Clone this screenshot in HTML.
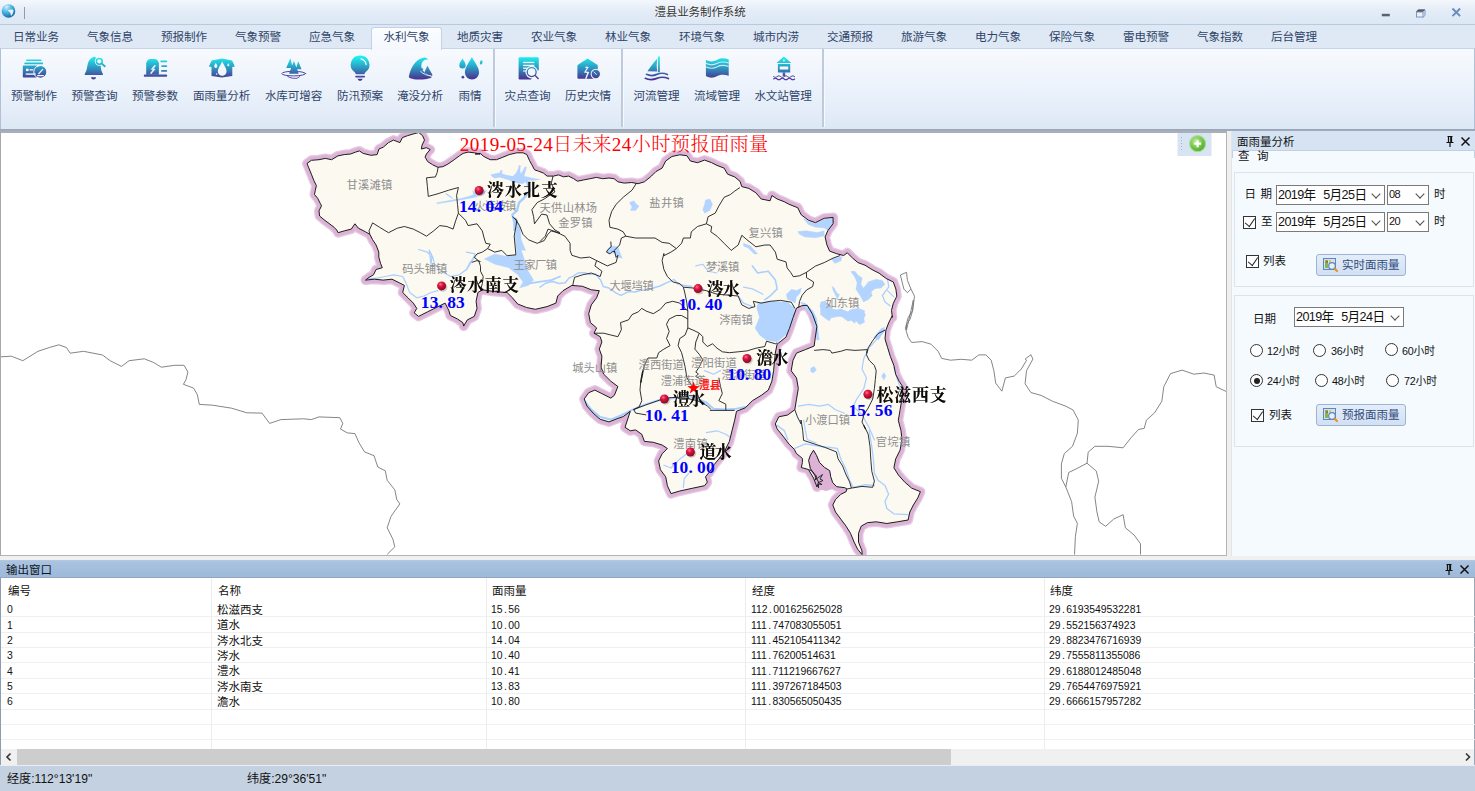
<!DOCTYPE html>
<html lang="zh-CN">
<head>
<meta charset="utf-8">
<title>澧县业务制作系统</title>
<style>
*{box-sizing:border-box;margin:0;padding:0}
html,body{width:1475px;height:791px;overflow:hidden;background:#dfe9f5}
body{position:relative;font-family:"Liberation Sans","Noto Sans CJK SC",sans-serif;font-size:11.5px;color:#1e2a3c;line-height:1}
.abs{position:absolute}
/* title bar */
#title{left:0;top:0;width:1475px;height:25px;background:linear-gradient(#f4f8fc 0,#e3ecf7 45%,#dde8f5 100%);border-bottom:1px solid #b9c9de}
#title .cap{left:0;width:1400px;top:6.500px;text-align:center;font-size:11.5px;color:#333;letter-spacing:-.1px;text-shadow:0 0 2px #fff}
/* tabs */
#tabs{left:0;top:25px;width:1475px;height:23px;background:#dfe9f5}
.tab{position:absolute;top:0;width:74px;height:23px;text-align:center;line-height:24px;font-size:11.6px;color:#2f4468;letter-spacing:-.15px}
.tab.on{top:2px;height:23px;z-index:3;line-height:18.500px;background:linear-gradient(#fbfdff,#f4f8fd);border:1px solid #c3d2e5;border-bottom:none;border-radius:3px 3px 0 0;width:71px}
/* ribbon */
#ribbon{left:0;top:48px;width:1475px;height:81px;background:linear-gradient(#f7fafe 0,#eef4fc 40%,#dde8f6 100%);border-top:1px solid #c6d4e6;border-left:1px solid #b1c0d5;border-right:1px solid #b1c0d5}#ribbon>*{margin-left:-1px}
.rb{position:absolute;top:0;height:78px;text-align:center}
.rb svg{position:absolute;top:7px;left:50%;margin-left:-14px;width:28px;height:26px}
.rb span{position:absolute;left:-60px;right:-60px;top:41px;text-align:center;font-size:11.6px;color:#2f4468;white-space:nowrap;letter-spacing:-.15px}
.sep{position:absolute;top:0;width:1.500px;height:78px;background:#bfcbdc;box-shadow:1px 0 0 #f7fafd}
/* map */
#map{left:0;top:129px;width:1227px;height:426.600px;background:#fff;border:1px solid #b4b4b4;border-top:4px solid #abafb6;border-left:1px solid #a8a8a8;overflow:hidden}#map>svg{left:0!important;top:-1px!important}
/* right panel */
#rp{left:1231px;top:131px;width:244px;height:425.500px;background:#f5fafe;border-left:1px solid #e2e5ea}
#rp .hd{left:0;top:0;width:243px;height:19px;background:#d6e3f2}
#rp .hd b{position:absolute;left:5px;top:5.500px;font-weight:normal;font-size:11.5px;color:#111}
.box{position:absolute;border:1px solid #dde3ea;background:#f5fafe}
.combo{position:absolute;background:#fff;border:1px solid #7a7a7a;height:20px;font-size:12.6px;color:#111;line-height:18px;padding-left:1px;white-space:pre;letter-spacing:-.6px;word-spacing:.9px}
.combo i{position:absolute;right:5px;top:5px;width:6px;height:6px;border-right:1px solid #555;border-bottom:1px solid #555;transform:rotate(45deg) scale(1.1,1.1)}
.lbl.s{font-size:10.8px}.lbl.s{letter-spacing:-.2px}.lbl{position:absolute;font-size:11.5px;color:#111;white-space:nowrap}
.chk{position:absolute;width:13px;height:13px;border:1px solid #333;background:#fff;overflow:hidden}
.chk:after{content:"";position:absolute;left:3.300px;top:-1.200px;width:4.600px;height:9px;border-right:1.200px solid #222;border-bottom:1.200px solid #222;transform:rotate(40deg) skewX(6deg)}
.rad{position:absolute;width:13px;height:13px;border:1px solid #333;border-radius:50%;background:#fff}
.rad.on:after{content:"";position:absolute;left:2.5px;top:2.5px;width:6px;height:6px;border-radius:50%;background:#222}
.btn{position:absolute;width:90px;height:22px;border:1px solid #9bb3d4;border-radius:3px;background:linear-gradient(#e4edf9,#d3e0f3);font-size:11.5px;color:#2f4c7c;line-height:20px;padding-left:25px;white-space:nowrap}
/* output */
#gap{left:0;top:556px;width:1475px;height:5px;background:#f0f0f0}#vgap{left:1227px;top:131px;width:4px;height:426px;background:#f0f0f0}
#ohd{left:0;top:560px;width:1475px;height:18px;z-index:2;border-bottom:1px solid #93a6c0;background:linear-gradient(#b3c9e4 0,#a9c2e0 12%,#9eb9d9 100%);}
#ohd b{position:absolute;left:6px;top:4.500px;font-weight:normal;font-size:11.5px;color:#0c1522}
#tbl{left:0;top:577px;width:1475px;height:172px;background:#fff;border-left:1.500px solid #8f9cb0;border-right:1px solid #9aa7b8}
.row{position:absolute;left:0;width:1474px;height:15.36px;border-bottom:1px solid #f0f0f0}
.c{position:absolute;top:2.800px;font-size:11.5px;color:#111;white-space:nowrap}
.n{font-size:10.4px;letter-spacing:-.02px;top:3.300px}.n u{text-decoration:none;padding:0 1.45px}
.vl{position:absolute;top:0;width:1px;height:172px;background:#ececec}
#hsb{left:0;top:749px;width:1475px;height:17px;background:#f0f0f0;border-left:1.500px solid #8f9cb0;border-right:1px solid #9aa7b8;border-bottom:1px solid #93a2b8}
#hsb .th{position:absolute;left:15.500px;top:0;width:934px;height:16px;background:#cdcdcd}
#status{left:0;top:765px;width:1475px;height:26px;background:#c4d1e1;border-top:1px solid #e9eef5}
#status span{position:absolute;top:7px;font-size:12.1px;color:#111;white-space:nowrap}
</style>
</head>
<body>
<!--TITLE-->
<div id="title" class="abs">
<svg class="abs" style="left:0;top:2px" width="18" height="18" viewBox="0 2 18 18"><defs><radialGradient id="gl" cx=".35" cy=".22" r=".85"><stop offset="0" stop-color="#c9eefc"/><stop offset=".35" stop-color="#63c0ea"/><stop offset=".75" stop-color="#2588c6"/><stop offset="1" stop-color="#13609f"/></radialGradient></defs><circle cx="8.500" cy="11" r="6.800" fill="url(#gl)"/><path d="M7.800 10.500c1.500-.7 3.200-1.200 4.800-1 .7.400 1 1 .9 1.800-.5 1.500-1 2.900-1.600 4-.4.300-.8.300-1 0-.2-1.100-.4-2-.9-2.900-.8-.5-1.700-1-2.200-1.900z" fill="#f4f8fb" opacity=".92"/><path d="M5.500 6.500c1.500-.8 3.400-1 5-.5-1 .5-2.400.6-3.300 1.200-.7.500-1.500.3-1.700-.7z" fill="#e8f6fd" opacity=".55"/><path d="M2.300 13.500c.5.300 1 .4 1.400.9-.6.100-1.100-.2-1.400-.9z" fill="#fff" opacity=".7"/></svg>
<div class="abs" style="left:24px;top:7px;width:1.300px;height:11.600px;background:#9a9aa0"></div>
<div class="abs cap">澧县业务制作系统</div>
<svg class="abs" style="left:1375px;top:0" width="100" height="25" viewBox="1375 0 100 25"><rect x="1381.800" y="13.800" width="8" height="2.500" fill="#59606f"/><path d="M1416.500 12.200l2-2.300h6.500v5.300l-2 2.300" fill="#dfe9f5" stroke="#7c98c2" stroke-width="1"/><rect x="1416.500" y="12" width="6.500" height="5" fill="#e9f0f9" stroke="#7c98c2" stroke-width="1"/><path d="M1416 11.800l2.200-2.400h7l-2.200 2.400z" fill="#585858"/><path d="M1452.500 8.500l7.600 7.600M1460.100 8.500l-7.600 7.600" stroke="#6c8cbc" stroke-width="2" fill="none"/></svg>
</div>
<!--TABS-->
<div id="tabs" class="abs">
<div class="tab" style="left:-1px">日常业务</div>
<div class="tab" style="left:73px">气象信息</div>
<div class="tab" style="left:147px">预报制作</div>
<div class="tab" style="left:221px">气象预警</div>
<div class="tab" style="left:295px">应急气象</div>
<div class="tab on" style="left:371px">水利气象</div>
<div class="tab" style="left:443px">地质灾害</div>
<div class="tab" style="left:517px">农业气象</div>
<div class="tab" style="left:591px">林业气象</div>
<div class="tab" style="left:665px">环境气象</div>
<div class="tab" style="left:739px">城市内涝</div>
<div class="tab" style="left:813px">交通预报</div>
<div class="tab" style="left:887px">旅游气象</div>
<div class="tab" style="left:961px">电力气象</div>
<div class="tab" style="left:1035px">保险气象</div>
<div class="tab" style="left:1109px">雷电预警</div>
<div class="tab" style="left:1183px">气象指数</div>
<div class="tab" style="left:1257px">后台管理</div>
</div>
<!--RIBBON-->
<div id="ribbon" class="abs">

<svg class="abs" style="left:0;top:-1px" width="1475" height="81" viewBox="0 48 1475 81">
<defs><linearGradient id="ig" gradientUnits="userSpaceOnUse" x1="0" y1="57" x2="0" y2="80"><stop offset="0" stop-color="#1ff0ee"/><stop offset=".45" stop-color="#2c9cc4"/><stop offset=".8" stop-color="#41529f"/><stop offset="1" stop-color="#4a2c92"/></linearGradient></defs>
<g fill="url(#ig)" stroke="none">
<!-- 1 预警制作 -->
<rect x="26" y="59.4" width="15.6" height="1.7" rx=".8"/><rect x="24.3" y="62.4" width="18.8" height="1.9" rx=".9"/>
<path d="M23.6 65.6h13.5v12h-13.5a.8.8 0 0 1-.8-.8v-10.4a.8.8 0 0 1 .8-.8z"/>
<circle cx="40.5" cy="71.9" r="5.9"/>
<!-- 2 预警查询 -->
<path d="M93.3 57c1.2-.6 2.2 0 2.6 1 1.2 2 3.2 3.500 4.600 6.500.6 3.500.4 6.500 2.300 9.200.4.700.1 1.400-.700 1.400h-16.600c-.8 0-1.100-.7-.7-1.400 2.200-3 2.200-6.500 2.900-9.700.6-3 2.700-5.700 5.600-7z"/>
<path d="M91 77.300h5c0 1.300-1.100 2.100-2.500 2.100s-2.500-.8-2.500-2.100z"/>
<!-- 3 预警参数 -->
<path d="M146.200 74.800v-11.200a4.500 4.500 0 0 1 4.500-4.500h3.700a4.500 4.500 0 0 1 4.500 4.500v11.200z"/>
<rect x="143.800" y="74.600" width="23.400" height="2.100" rx=".9"/>
<rect x="160.300" y="60.600" width="6.900" height="1.700" rx=".8"/><rect x="161.300" y="65.300" width="5.900" height="1.700" rx=".8"/><rect x="161" y="70.100" width="6.200" height="1.700" rx=".8"/>
<!-- 4 面雨量分析 -->
<path d="M221.900 58.600l10.200 1.900 2.800 6.100-2.600.5v8.800l-10.400 1.700-10.400-1.700v-8.800l-2.600-.5 2.800-6.100z"/>
<!-- 5 水库可增容 -->
<path d="M290.400 58.300l2.300 9.800h-6.500zM293.900 60.900l4.800 12.600h-9.600zM298.200 61.300l3.400 8h-5.800z"/>
<!-- 6 防汛预案 -->
<path d="M360.100 55.400a9.300 9.300 0 0 1 5.400 16.900c-.6.500-.9 1.100-1 1.900h-8.800c-.1-.8-.4-1.400-1-1.900a9.300 9.300 0 0 1 5.400-16.900z"/>
<rect x="355.200" y="75.800" width="9.800" height="1.700" rx=".8"/><path d="M357.400 78.800h5.400l-1.600 1.900h-2.200z"/>
<!-- 7 淹没分析 -->
<path d="M408.800 77c1.500-8.500 6-17.500 14.500-19.300 2-.4 4 .3 4.900 2-2.700-.6-5.500.8-6.500 3.600-1.200 3.400.2 6.600 2.900 9.300 2.300 2.100 5.200 3.400 7.400 4.200-.3 1.200-5 2.800-11.600 2.800s-11.200-1.200-11.600-2.600z"/>
<path d="M427.400 65.700l4.900 8.800c.2.700-.1 1.300-.6 1.500-2.800-.8-5.400-2.200-7.300-3.800z"/>
<path d="M421.200 69.400l1.300-1.700.9 2.200z"/>
<!-- 8 雨情 -->
<path d="M471.900 57c2.600 5.200 7.200 10.200 7.200 15.500a7.100 7.100 0 0 1-14.200 0c0-5.300 4.400-10.300 7-15.500z"/>
<path d="M462.500 58.600c1.200 2.400 3.200 4.300 3.200 6.600a3.200 3.200 0 0 1-6.400 0c0-2.300 2-4.200 3.200-6.600z"/>
<ellipse cx="481.200" cy="62.400" rx="1.300" ry="2.200" transform="rotate(12 481.200 62.400)"/><circle cx="462.900" cy="77.200" r="1.350"/>
<!-- 9 灾点查询 -->
<path d="M519.600 57.200h18.200a1 1 0 0 1 1 1v11.800l-7.800 9.600h-11.400a1 1 0 0 1-1-1v-20.400a1 1 0 0 1 1-1z"/>
<!-- 10 历史灾情 -->
<path d="M587.600 58.500l9.600 6.200c.4.300.6.700.6 1.200v11.800a1 1 0 0 1-1 1h-18.400a1 1 0 0 1-1-1v-11.800c0-.5.200-.9.600-1.200z"/>
<!-- 11 河流管理 -->
<path d="M658.100 56.600h1.700v15.600h-1.700z"/><path d="M657.600 58.200c-1 4.500-.9 9-.2 13.300l-10-.2c3.500-5 6.300-9.200 10.200-13.100z"/>
<!-- 12 流域管理 -->
<path d="M705.900 59.800c4 2.200 7.400 2.200 11.400 0s7.400-1.600 11.400-.3v16.300c-4-1.300-7.400-1.900-11.400.3s-7.400 2.200-11.400 0z"/>
<!-- 13 水文站管理 -->
<path d="M783.900 56.400l7.400 6.700h-14.800z"/><rect x="777.900" y="64" width="12.300" height="8.600" rx=".6"/><rect x="782.700" y="72.400" width="2.500" height="3.700"/>
</g>
<g fill="none" stroke="url(#ig)" stroke-linecap="round">
<!-- 2 magnifier -->
<circle cx="99.300" cy="61.300" r="4.500" stroke="none" fill="#f4f8fc"/><path d="M101.600 63.500l3.200 2.700" stroke="#f4f8fc" stroke-width="3.400"/><circle cx="99.300" cy="61.300" r="2.900" stroke-width="1.500" fill="#f4f8fc"/><path d="M101.700 63.600l3.100 2.600" stroke-width="1.900"/>
<!-- 5 ripples -->
<ellipse cx="293.700" cy="73.600" rx="12" ry="2.300" stroke-width="1" stroke="#4b45a0"/>
<path d="M287.500 76.200c2 1.600 5 2.300 8 2.100M299.800 76.400c-.8.900-2 1.600-3.600 2" stroke-width=".9" stroke="#4b38a0"/>
<!-- 11 waves -->
<path d="M646.500 74.300c3.300 1.600 6.800 1.600 10.300.1s7.200-1.500 10.600.1" stroke-width="1.700"/>
<path d="M645.300 78.300c3.600 1.700 7.500 1.700 11.500.1s7.900-1.500 11.600.2" stroke-width="1.700"/>
<!-- 13 waves -->
<path d="M773.600 76.600c1.200 1 2.300 1 3.500 0s2.300-1 3.500 0 2.300 1 3.500 0 2.300-1 3.500 0 2.300 1 3.500 0 2.300-1 3.500 0" stroke-width="1" stroke="#4a3a9c"/>
<path d="M773.600 79c1.200-1 2.300-1 3.500 0s2.300 1 3.500 0 2.300-1 3.500 0 2.300 1 3.500 0 2.300-1 3.500 0 2.300 1 3.500 0" stroke-width="1.100" stroke="#4a2f96"/>
</g>
<!-- cone base repaint over ripple -->
<path d="M293.900 63l4.500 10.400h-9z" fill="url(#ig)"/>
<g fill="#f3f7fc" stroke="none">
<!-- 1 whites -->
<circle cx="27.300" cy="69.900" r="1.450"/><rect x="29.500" y="69.200" width="3.600" height="1.300"/><rect x="25.700" y="73.400" width="10" height="1.400"/>
<circle cx="40.500" cy="71.900" r="6.700" fill="none" stroke="#f3f7fc" stroke-width="1"/>
<path d="M38 73.600l4.500-4.800.9.800-4.500 4.800z"/><rect x="37.100" y="74.900" width="6.800" height="1.300" rx=".5"/>
<!-- 3 bolt -->
<path d="M154.500 65l-3.800 4.400 2.200.3-2.900 3.600 1.300.8 4.200-5-2.100-.4 2.600-2.900z"/>
<!-- 4 drops -->
<path d="M222.200 61.400c1.500 3.300 4.400 6.700 4.400 9.900a4.400 4.400 0 0 1-8.800 0c0-3.200 2.900-6.600 4.400-9.900z"/>
<path d="M215.800 62.800c.6 1.400 1.600 2.300 1.600 3.500a1.600 1.600 0 0 1-3.200 0c0-1.200 1-2.100 1.600-3.500z"/>
<path d="M228.300 63c.4.900 1 1.500 1 2.300a1 1 0 0 1-2 0c0-.8.600-1.400 1-2.300z"/><circle cx="216.600" cy="74" r=".8"/>
<!-- 6 highlight -->
<path d="M361 58.800c2.600.7 4.600 2.900 5.200 5.700" fill="none" stroke="#f3f7fc" stroke-width="1.300" stroke-linecap="round"/>
<!-- 7 foam line -->
<path d="M420.400 71.200c2.800 2.900 6.700 4.300 11.200 5" fill="none" stroke="#f3f7fc" stroke-width=".9"/>
<!-- 9 doc lines + magnifier -->
<rect x="523.100" y="61.800" width="11.200" height="1.300"/><rect x="523.100" y="64.800" width="11.200" height="1.300"/><rect x="523.100" y="67.600" width="5" height="1.300"/><rect x="523.100" y="70.400" width="3" height="1.200"/>
<circle cx="531.700" cy="72.100" r="6.300"/>
<path d="M531 79.700l7.900-9.800v9.800z"/>
<!-- 10 crack + clock ring -->
<path d="M585.600 66.400l3.200.6-2.900 4.600 3.300.4-2.700 6.700h-1.500l2.300-5.700-3.300-.4 2.800-4.600-1.500-.3z"/>
<circle cx="595.800" cy="74" r="5.200"/>
<!-- 11 sail slit -->
<path d="M657.500 59.500c-.9 3.800-.9 7.700-.3 11.500l.7 0c-.5-3.800-.5-7.600 0-11.400z" opacity=".75"/>
<!-- 12 lines -->
<path d="M705.900 63.300c4 2.200 7.400 2.200 11.400 0s7.400-1.600 11.400-.3M705.900 66.700c4 2.200 7.400 2.200 11.400 0s7.400-1.600 11.400-.3" fill="none" stroke="#f3f7fc" stroke-width="1.100" opacity=".8"/>
<!-- 13 window + roof dot -->
<rect x="779.700" y="66.600" width="8.600" height="3" rx=".4"/><circle cx="783.900" cy="60.500" r=".9"/><rect x="776" y="63.100" width="16" height=".9"/>
</g>
<g fill="url(#ig)" stroke="none">
<!-- 9 magnifier ring -->
<path d="M531.700 67a5.100 5.100 0 1 0 0 10.200 5.100 5.100 0 0 0 0-10.200zm0 1.300a3.800 3.800 0 1 1 0 7.600 3.800 3.800 0 0 1 0-7.600z" fill-rule="evenodd"/>
<path d="M534.300 75.500l1-1 3.700 4-1 1z"/>
<!-- 10 clock -->
<circle cx="595.800" cy="74" r="4.200"/>
</g>
<path d="M594 72l2.400 2.600" stroke="#f3f7fc" stroke-width=".9" fill="none" stroke-linecap="round"/>
</svg>
<div class="rb" style="left:33.0px;width:2px"><span>预警制作</span></div>
<div class="rb" style="left:93.5px;width:2px"><span>预警查询</span></div>
<div class="rb" style="left:154.0px;width:2px"><span>预警参数</span></div>
<div class="rb" style="left:220.5px;width:2px"><span>面雨量分析</span></div>
<div class="rb" style="left:292.5px;width:2px"><span>水库可增容</span></div>
<div class="rb" style="left:359.0px;width:2px"><span>防汛预案</span></div>
<div class="rb" style="left:419.0px;width:2px"><span>淹没分析</span></div>
<div class="rb" style="left:469.0px;width:2px"><span>雨情</span></div>
<div class="rb" style="left:526.5px;width:2px"><span>灾点查询</span></div>
<div class="rb" style="left:587.0px;width:2px"><span>历史灾情</span></div>
<div class="rb" style="left:655.5px;width:2px"><span>河流管理</span></div>
<div class="rb" style="left:716.0px;width:2px"><span>流域管理</span></div>
<div class="rb" style="left:782.0px;width:2px"><span>水文站管理</span></div>
<div class="sep" style="left:493px"></div>
<div class="sep" style="left:621px"></div>
<div class="sep" style="left:822px"></div>

</div>
<div class="abs" style="left:0;top:128.600px;width:1475px;height:2px;background:linear-gradient(#98a5b8,#a3adbb);z-index:4"></div>
<!--MAP-->
<div id="map" class="abs">
<!--MAPSVG_S-->
<svg class="abs" style="left:0;top:0" width="1226" height="423" viewBox="1 132 1226 423">
<defs><radialGradient id="dot" cx=".38" cy=".32" r=".75"><stop offset="0" stop-color="#ff6f8e"/><stop offset=".35" stop-color="#dc143c"/><stop offset="1" stop-color="#7a0424"/></radialGradient><radialGradient id="gp" cx=".4" cy=".35" r=".7"><stop offset="0" stop-color="#c4ec9c"/><stop offset=".6" stop-color="#6fc247"/><stop offset="1" stop-color="#4fa22e"/></radialGradient></defs>
<g fill="none" stroke="#777" stroke-width=".9" stroke-linejoin="round">
<path d="M0 356.9 11.4 356.2 22.8 360.7 38 351.3 49.4 347.5 58.8 344.8 66.4 347.5 70.2 353.2 83.5 351.3 102.5 355 110.1 360.7 121.5 366.4 129.1 360.7 144.3 358.8 153.8 362.6 161.4 367.2 174.6 365.3 184.1 365.3 187.9 372.1 186 379.7 183.4 384.3 193.6 388.1 197.4 394.9 199.3 404.4 212.6 405.2 231.6 408.2 246.8 412.8 262 413.1 269.6 423.4 280.9 419.6 303.7 418.8 311.3 419.6 318.9 416.9 339.8 417.7 342.8 423.4 340.5 429.1 347.4 432.9 355 433.6 358.8 442.4 364.5 451.9 374 455.7 377.8 467 385.3 470.8 387.2 480.3 394.8 489.8 396.7 499.3 399.8 503.9 391 516.4 387.2 527.8 392.9 539.2 394.8 546.8 387.2 554.4"/>
<path d="M900.4 275 906.5 272.3 907.4 280.3 911 289.1 914.5 296.2 912.7 310.4 910.1 319.2 906.5 324.5 906.5 330 913.4 300 912.5 310.6 908.1 317.7 905.4 328.3 908.1 337.2 911.6 342.5 922.2 341.6 931.1 344.2 938.1 351.3 941.7 358.4 950.5 360.2 961.2 359.3 971.8 360.2 978.8 354.9 985.9 354.9 991.2 360.2 993.9 370.8 995.7 383.2 1001.9 391.2 1005.4 377.9 1014.2 376.1 1021.3 369 1026.6 360.2 1025.1 359.1 1030.9 354.7 1032.9 359.1 1026.5 370.7 1025.1 383.8 1030.9 392.5 1041.1 395.4 1052.7 401.3 1065.8 406.2 1073.1 410 1078.3 420.2 1077.4 433.2 1072.5 446.3 1064.3 453.6 1061.4 463.8 1061.4 478.3 1065.8 487 1071.6 501.6 1073.6 516.1 1077.4 523.4 1075.4 536.5 1074.5 554.5"/>
<path d="M900.4 275 902.1 282 903.9 289.1 907.4 292.7 911 289.1"/>
<path d="M1065.8 487 1068.7 472.5 1076 469 1087 463.2 1088.2 452.1 1094.9 446.3 1108 446.3 1123.1 447.8 1131.2 437.6 1138.5 429.5 1144.3 428.3 1146.4 420.2 1154.5 412.9 1161.8 401.3 1163.8 386.7 1170.5 373.6 1182.1 370.1 1193.8 374.2 1203.9 373 1214.1 375.1 1216.2 386.7 1226.6 391.7"/>
<path d="M1087 463.2 1096.3 471.1 1098.7 481.2 1094.9 497.2 1096.9 511.8 1099.2 521.9 1105.6 526.3 1113.8 519 1123.1 514.7 1125.4 527.8 1134.1 535 1140.5 543.8 1140.5 554.5"/>
</g>
<path d="M307 163.5 311.4 160.3 319 159.7 325.3 158.4 331.6 159.7 337.9 155.9 344.2 154.6 350.6 154 355.6 152.1 359.4 150.9 363.2 153.4 370.8 155.3 377.1 154.6 379 149 383.4 147.1 388.5 142.6 393.5 140.1 399.9 142.6 402.4 137.6 407.4 135.7 413.8 133.8 418.8 132.5 422.6 135.7 424.5 140.1 422 145.2 421.4 149 426.4 147.7 430.2 149.6 426.4 154 425.1 157.2 427.7 161.6 432.7 164.8 437.8 167.3 442.8 166.7 447.9 164.1 454.2 159.7 459.3 155.9 463.1 153.4 468.1 152.1 474.4 152.8 480 154 475.1 154 480.1 153.4 483.9 156.5 490.2 159.7 496.5 159.7 502.9 157.2 509.2 154.6 516.8 152.8 523.1 152.8 526.9 154.6 529.4 160.3 531.9 164.8 534.5 169.8 538.3 171.1 543.3 173 547.1 176.1 553.4 176.1 558.5 174.9 563.5 176.8 568.6 176.1 573.7 178.7 577.4 181.2 583.8 179.9 590.1 178.7 596.4 177.4 602.7 178.7 609 178 614.1 178.7 617.9 181.8 624.2 183.1 631.8 182.5 638.1 183.7 644.4 181.8 651.5 176 655.9 171.6 662.1 168.1 665.7 161 671.9 156.5 679.8 154.8 686.9 155.7 690.4 161 697.5 162.7 704.6 160.1 711.7 162.7 717 165.4 724.1 168.1 727.6 174.2 734.7 176.9 740 181.3 741.8 186.6 748.8 188.4 755.9 192.8 761.2 199 770.1 200.8 771.9 195.5 777.2 199 784.2 201.7 788.8 204.2 797.7 207.7 801.2 214.8 808.3 220.1 815.4 222.7 824.2 218.3 833.1 217.4 833.1 223.6 827.8 230.7 825.1 236.9 826.9 244.9 829.6 251.1 836.6 253.7 843.7 255.5 847.3 252.8 852.6 258.1 857.9 262.6 865 265.2 872 269.6 879.1 273.2 886.2 278.5 893.3 282 895.9 289.1 896.8 296.2 893.3 303.3 891.5 310.4 892.4 317.4 892.1 315.9 888.6 323 885.9 330.1 885 338.9 887.7 347.8 890.4 356.6 893.9 365.5 895.7 374.3 899.2 381.4 902.7 386.7 901.9 399.1 900.1 409.7 898.3 420.4 901 430.6 901.9 439.5 900.1 450.1 895.7 458.9 893.9 467.8 898.3 474.9 904.5 481.9 911.6 488.1 920.4 491.7 917.8 497.9 913.4 505 909.8 512 908.1 520 897.4 521.8 886.8 523.5 876.2 521.8 867.3 522.7 861.2 526.2 858.5 533.3 858.5 542.1 862 551 862 554.5 857.6 549.2 854.1 542.1 850.5 533.3 846.1 526.2 840.8 519.1 835.5 512 832.8 505 835.5 499.6 840.8 494.3 846.1 491.7 846.8 488.8 844.8 487.7 836.7 486.7 832.7 482.7 830.7 476.6 829.7 470.6 824.6 467.5 819.5 462.5 816.5 455.4 813.5 450.3 810.5 455 808.6 460.4 810.4 468.5 814.5 474.6 818.5 482 817 487 813.5 478 808.4 469.5 801.3 467.5 802.4 462.5 802.4 458.4 796.3 453.4 794.3 449.3 789.2 444.3 783.1 436.2 778.1 430.1 777.1 428.8 775.3 423.9 778.8 416.8 787.7 415 794.8 409.7 796.5 399.1 798.3 388.5 796.5 377.9 791.2 370.8 793 360.2 796.5 353.1 805.4 349.6 814.2 346 815.1 338.9 816.9 326.5 812.5 314.2 807.2 305.3 801.9 305.7 796.5 308 793 317.7 789.5 328.3 785.9 337.2 777.1 344.2 775.3 353.1 773.6 370.6 771.9 381.2 768.3 390.1 761.2 395.4 752.4 400.7 745.3 407.8 736.5 411.3 734.7 420.2 732 430.8 729.4 441.4 724.1 452 718.8 459.1 714.3 464.4 709.9 471.5 705.5 476.8 707.3 482.1 704.6 485.7 692.2 488.3 679.8 491 671 493.6 667.4 485.7 665.7 476.8 660.4 469.7 658.6 460.9 662.1 453.8 667.4 448.5 662.1 445 653.3 442.3 644.4 441.4 641.8 434.3 635.6 429.9 630.3 430.8 625 427.3 630.3 411.3 623.2 416.6 617.9 418.4 609 421.9 600.2 419.3 593.1 413.1 586.9 406 584.2 398.9 588.7 392.7 594.9 390.1 601.9 393.6 610.8 398.1 614.3 395.4 617.9 386.5 610.8 381.2 603.7 374.2 601.1 367.1 601.9 356.2 599.3 349.1 601.9 342 600.2 336.7 594 333.2 596.6 327.9 590.4 322.6 588.7 313.7 591.3 304.9 596.6 297.8 599.3 290.7 591.3 289.8 582.5 286.3 571.9 285.4 563 290.7 557.7 296 555.9 303.1 547.1 306.6 535.4 309.3 526.5 307.5 517.7 304 512.4 297.8 507.1 292.5 494.7 291.6 482.3 289.8 477.9 292.5 476.1 301.3 477 308.4 474.3 316.4 467.3 319.9 463.7 326.1 462.8 322.6 457.5 319 450.4 315.5 448.7 310.2 445.1 303.1 436.3 307.5 427.4 311.9 418.6 316.4 414.2 312.8 416.8 308.4 413.3 303.1 408 297.8 402.7 292.5 404.4 285.4 399.1 282.7 392 279.2 383.2 280.1 374.3 279.2 365.5 280.1 369 277.4 373.5 274.8 376.1 269.5 382.3 267.7 380.5 263.3 378.8 257.1 378.8 252.1 376.1 245 372.6 239.7 369.9 234.4 365.5 231.8 358.4 228.2 354.9 223.8 351.3 229.1 344.2 230.9 338.1 232.7 336.7 230 334.1 227.3 329.1 223.5 324 219.7 319.6 216 319 210.9 321.5 205.8 320.2 203.3 317.7 198.3 314.5 194.5 315.2 190.7 316.4 185.6 313.9 180.6 311.4 174.2 308.8 167.9Z" fill="none" stroke="#e6cbe2" stroke-width="10" stroke-linejoin="round"/>
<path d="M307 163.5 311.4 160.3 319 159.7 325.3 158.4 331.6 159.7 337.9 155.9 344.2 154.6 350.6 154 355.6 152.1 359.4 150.9 363.2 153.4 370.8 155.3 377.1 154.6 379 149 383.4 147.1 388.5 142.6 393.5 140.1 399.9 142.6 402.4 137.6 407.4 135.7 413.8 133.8 418.8 132.5 422.6 135.7 424.5 140.1 422 145.2 421.4 149 426.4 147.7 430.2 149.6 426.4 154 425.1 157.2 427.7 161.6 432.7 164.8 437.8 167.3 442.8 166.7 447.9 164.1 454.2 159.7 459.3 155.9 463.1 153.4 468.1 152.1 474.4 152.8 480 154 475.1 154 480.1 153.4 483.9 156.5 490.2 159.7 496.5 159.7 502.9 157.2 509.2 154.6 516.8 152.8 523.1 152.8 526.9 154.6 529.4 160.3 531.9 164.8 534.5 169.8 538.3 171.1 543.3 173 547.1 176.1 553.4 176.1 558.5 174.9 563.5 176.8 568.6 176.1 573.7 178.7 577.4 181.2 583.8 179.9 590.1 178.7 596.4 177.4 602.7 178.7 609 178 614.1 178.7 617.9 181.8 624.2 183.1 631.8 182.5 638.1 183.7 644.4 181.8 651.5 176 655.9 171.6 662.1 168.1 665.7 161 671.9 156.5 679.8 154.8 686.9 155.7 690.4 161 697.5 162.7 704.6 160.1 711.7 162.7 717 165.4 724.1 168.1 727.6 174.2 734.7 176.9 740 181.3 741.8 186.6 748.8 188.4 755.9 192.8 761.2 199 770.1 200.8 771.9 195.5 777.2 199 784.2 201.7 788.8 204.2 797.7 207.7 801.2 214.8 808.3 220.1 815.4 222.7 824.2 218.3 833.1 217.4 833.1 223.6 827.8 230.7 825.1 236.9 826.9 244.9 829.6 251.1 836.6 253.7 843.7 255.5 847.3 252.8 852.6 258.1 857.9 262.6 865 265.2 872 269.6 879.1 273.2 886.2 278.5 893.3 282 895.9 289.1 896.8 296.2 893.3 303.3 891.5 310.4 892.4 317.4 892.1 315.9 888.6 323 885.9 330.1 885 338.9 887.7 347.8 890.4 356.6 893.9 365.5 895.7 374.3 899.2 381.4 902.7 386.7 901.9 399.1 900.1 409.7 898.3 420.4 901 430.6 901.9 439.5 900.1 450.1 895.7 458.9 893.9 467.8 898.3 474.9 904.5 481.9 911.6 488.1 920.4 491.7 917.8 497.9 913.4 505 909.8 512 908.1 520 897.4 521.8 886.8 523.5 876.2 521.8 867.3 522.7 861.2 526.2 858.5 533.3 858.5 542.1 862 551 862 554.5 857.6 549.2 854.1 542.1 850.5 533.3 846.1 526.2 840.8 519.1 835.5 512 832.8 505 835.5 499.6 840.8 494.3 846.1 491.7 846.8 488.8 844.8 487.7 836.7 486.7 832.7 482.7 830.7 476.6 829.7 470.6 824.6 467.5 819.5 462.5 816.5 455.4 813.5 450.3 810.5 455 808.6 460.4 810.4 468.5 814.5 474.6 818.5 482 817 487 813.5 478 808.4 469.5 801.3 467.5 802.4 462.5 802.4 458.4 796.3 453.4 794.3 449.3 789.2 444.3 783.1 436.2 778.1 430.1 777.1 428.8 775.3 423.9 778.8 416.8 787.7 415 794.8 409.7 796.5 399.1 798.3 388.5 796.5 377.9 791.2 370.8 793 360.2 796.5 353.1 805.4 349.6 814.2 346 815.1 338.9 816.9 326.5 812.5 314.2 807.2 305.3 801.9 305.7 796.5 308 793 317.7 789.5 328.3 785.9 337.2 777.1 344.2 775.3 353.1 773.6 370.6 771.9 381.2 768.3 390.1 761.2 395.4 752.4 400.7 745.3 407.8 736.5 411.3 734.7 420.2 732 430.8 729.4 441.4 724.1 452 718.8 459.1 714.3 464.4 709.9 471.5 705.5 476.8 707.3 482.1 704.6 485.7 692.2 488.3 679.8 491 671 493.6 667.4 485.7 665.7 476.8 660.4 469.7 658.6 460.9 662.1 453.8 667.4 448.5 662.1 445 653.3 442.3 644.4 441.4 641.8 434.3 635.6 429.9 630.3 430.8 625 427.3 630.3 411.3 623.2 416.6 617.9 418.4 609 421.9 600.2 419.3 593.1 413.1 586.9 406 584.2 398.9 588.7 392.7 594.9 390.1 601.9 393.6 610.8 398.1 614.3 395.4 617.9 386.5 610.8 381.2 603.7 374.2 601.1 367.1 601.9 356.2 599.3 349.1 601.9 342 600.2 336.7 594 333.2 596.6 327.9 590.4 322.6 588.7 313.7 591.3 304.9 596.6 297.8 599.3 290.7 591.3 289.8 582.5 286.3 571.9 285.4 563 290.7 557.7 296 555.9 303.1 547.1 306.6 535.4 309.3 526.5 307.5 517.7 304 512.4 297.8 507.1 292.5 494.7 291.6 482.3 289.8 477.9 292.5 476.1 301.3 477 308.4 474.3 316.4 467.3 319.9 463.7 326.1 462.8 322.6 457.5 319 450.4 315.5 448.7 310.2 445.1 303.1 436.3 307.5 427.4 311.9 418.6 316.4 414.2 312.8 416.8 308.4 413.3 303.1 408 297.8 402.7 292.5 404.4 285.4 399.1 282.7 392 279.2 383.2 280.1 374.3 279.2 365.5 280.1 369 277.4 373.5 274.8 376.1 269.5 382.3 267.7 380.5 263.3 378.8 257.1 378.8 252.1 376.1 245 372.6 239.7 369.9 234.4 365.5 231.8 358.4 228.2 354.9 223.8 351.3 229.1 344.2 230.9 338.1 232.7 336.7 230 334.1 227.3 329.1 223.5 324 219.7 319.6 216 319 210.9 321.5 205.8 320.2 203.3 317.7 198.3 314.5 194.5 315.2 190.7 316.4 185.6 313.9 180.6 311.4 174.2 308.8 167.9Z" fill="none" stroke="#dcb3d6" stroke-width="7.500" stroke-linejoin="round"/>
<path d="M307 163.5 311.4 160.3 319 159.7 325.3 158.4 331.6 159.7 337.9 155.9 344.2 154.6 350.6 154 355.6 152.1 359.4 150.9 363.2 153.4 370.8 155.3 377.1 154.6 379 149 383.4 147.1 388.5 142.6 393.5 140.1 399.9 142.6 402.4 137.6 407.4 135.7 413.8 133.8 418.8 132.5 422.6 135.7 424.5 140.1 422 145.2 421.4 149 426.4 147.7 430.2 149.6 426.4 154 425.1 157.2 427.7 161.6 432.7 164.8 437.8 167.3 442.8 166.7 447.9 164.1 454.2 159.7 459.3 155.9 463.1 153.4 468.1 152.1 474.4 152.8 480 154 475.1 154 480.1 153.4 483.9 156.5 490.2 159.7 496.5 159.7 502.9 157.2 509.2 154.6 516.8 152.8 523.1 152.8 526.9 154.6 529.4 160.3 531.9 164.8 534.5 169.8 538.3 171.1 543.3 173 547.1 176.1 553.4 176.1 558.5 174.9 563.5 176.8 568.6 176.1 573.7 178.7 577.4 181.2 583.8 179.9 590.1 178.7 596.4 177.4 602.7 178.7 609 178 614.1 178.7 617.9 181.8 624.2 183.1 631.8 182.5 638.1 183.7 644.4 181.8 651.5 176 655.9 171.6 662.1 168.1 665.7 161 671.9 156.5 679.8 154.8 686.9 155.7 690.4 161 697.5 162.7 704.6 160.1 711.7 162.7 717 165.4 724.1 168.1 727.6 174.2 734.7 176.9 740 181.3 741.8 186.6 748.8 188.4 755.9 192.8 761.2 199 770.1 200.8 771.9 195.5 777.2 199 784.2 201.7 788.8 204.2 797.7 207.7 801.2 214.8 808.3 220.1 815.4 222.7 824.2 218.3 833.1 217.4 833.1 223.6 827.8 230.7 825.1 236.9 826.9 244.9 829.6 251.1 836.6 253.7 843.7 255.5 847.3 252.8 852.6 258.1 857.9 262.6 865 265.2 872 269.6 879.1 273.2 886.2 278.5 893.3 282 895.9 289.1 896.8 296.2 893.3 303.3 891.5 310.4 892.4 317.4 892.1 315.9 888.6 323 885.9 330.1 885 338.9 887.7 347.8 890.4 356.6 893.9 365.5 895.7 374.3 899.2 381.4 902.7 386.7 901.9 399.1 900.1 409.7 898.3 420.4 901 430.6 901.9 439.5 900.1 450.1 895.7 458.9 893.9 467.8 898.3 474.9 904.5 481.9 911.6 488.1 920.4 491.7 917.8 497.9 913.4 505 909.8 512 908.1 520 897.4 521.8 886.8 523.5 876.2 521.8 867.3 522.7 861.2 526.2 858.5 533.3 858.5 542.1 862 551 862 554.5 857.6 549.2 854.1 542.1 850.5 533.3 846.1 526.2 840.8 519.1 835.5 512 832.8 505 835.5 499.6 840.8 494.3 846.1 491.7 846.8 488.8 844.8 487.7 836.7 486.7 832.7 482.7 830.7 476.6 829.7 470.6 824.6 467.5 819.5 462.5 816.5 455.4 813.5 450.3 810.5 455 808.6 460.4 810.4 468.5 814.5 474.6 818.5 482 817 487 813.5 478 808.4 469.5 801.3 467.5 802.4 462.5 802.4 458.4 796.3 453.4 794.3 449.3 789.2 444.3 783.1 436.2 778.1 430.1 777.1 428.8 775.3 423.9 778.8 416.8 787.7 415 794.8 409.7 796.5 399.1 798.3 388.5 796.5 377.9 791.2 370.8 793 360.2 796.5 353.1 805.4 349.6 814.2 346 815.1 338.9 816.9 326.5 812.5 314.2 807.2 305.3 801.9 305.7 796.5 308 793 317.7 789.5 328.3 785.9 337.2 777.1 344.2 775.3 353.1 773.6 370.6 771.9 381.2 768.3 390.1 761.2 395.4 752.4 400.7 745.3 407.8 736.5 411.3 734.7 420.2 732 430.8 729.4 441.4 724.1 452 718.8 459.1 714.3 464.4 709.9 471.5 705.5 476.8 707.3 482.1 704.6 485.7 692.2 488.3 679.8 491 671 493.6 667.4 485.7 665.7 476.8 660.4 469.7 658.6 460.9 662.1 453.8 667.4 448.5 662.1 445 653.3 442.3 644.4 441.4 641.8 434.3 635.6 429.9 630.3 430.8 625 427.3 630.3 411.3 623.2 416.6 617.9 418.4 609 421.9 600.2 419.3 593.1 413.1 586.9 406 584.2 398.9 588.7 392.7 594.9 390.1 601.9 393.6 610.8 398.1 614.3 395.4 617.9 386.5 610.8 381.2 603.7 374.2 601.1 367.1 601.9 356.2 599.3 349.1 601.9 342 600.2 336.7 594 333.2 596.6 327.9 590.4 322.6 588.7 313.7 591.3 304.9 596.6 297.8 599.3 290.7 591.3 289.8 582.5 286.3 571.9 285.4 563 290.7 557.7 296 555.9 303.1 547.1 306.6 535.4 309.3 526.5 307.5 517.7 304 512.4 297.8 507.1 292.5 494.7 291.6 482.3 289.8 477.9 292.5 476.1 301.3 477 308.4 474.3 316.4 467.3 319.9 463.7 326.1 462.8 322.6 457.5 319 450.4 315.5 448.7 310.2 445.1 303.1 436.3 307.5 427.4 311.9 418.6 316.4 414.2 312.8 416.8 308.4 413.3 303.1 408 297.8 402.7 292.5 404.4 285.4 399.1 282.7 392 279.2 383.2 280.1 374.3 279.2 365.5 280.1 369 277.4 373.5 274.8 376.1 269.5 382.3 267.7 380.5 263.3 378.8 257.1 378.8 252.1 376.1 245 372.6 239.7 369.9 234.4 365.5 231.8 358.4 228.2 354.9 223.8 351.3 229.1 344.2 230.9 338.1 232.7 336.7 230 334.1 227.3 329.1 223.5 324 219.7 319.6 216 319 210.9 321.5 205.8 320.2 203.3 317.7 198.3 314.5 194.5 315.2 190.7 316.4 185.6 313.9 180.6 311.4 174.2 308.8 167.9Z" fill="#fcf9f1" stroke="none"/>
<path d="M813.5 451.5 816 456 819 463 824 468 829 471.5 830 477 832 483 836 487 826 490 818 488 815 476 810.5 468 809.5 460Z" fill="#dcb3d6" stroke="#dcb3d6" stroke-width="2"/>
<g fill="#b2d4ff" stroke="#b2d4ff" stroke-width=".3" stroke-linejoin="round">
<path d="M490.7 174.8 494.7 173.8 499.8 172.8 500.8 170.2 502.3 170.7 501.8 173.8 506.9 175.3 512.9 176.3 516 173.3 518 169.2 519 165.2 520.5 165.7 520 170.2 521 174.3 523.1 170.2 525.1 166.7 526.6 167.2 525.1 172.3 524.1 176.3 529.1 177.3 535.2 178.8 540.3 179.3 535.2 180.3 529.1 180.3 526.1 181.4 523.1 183.4 519 183.4 515 182.4 509.9 180.3 504.9 178.8 499.8 177.3 494.7 178.3 492.2 176.8Z"/>
<path d="M486.6 190.5 484.6 193.5 480.6 195.5 474.5 197.5 468.4 198.6 460.3 200.1 450.2 201.8 437.1 203.8 436.6 202.8 450.2 200.3 460.3 198.6 467.4 196.8 473.5 194.7 472.5 190.7 475.5 193 482.6 191Z"/>
<path d="M512.4 216.7 516.3 226.5 515 236.2 515.9 245 516.8 254.8 507.1 256.5 494.7 253.9 485.8 258.3 484.1 258.8 494.7 264.2 508.8 267.7 517.7 274.8 523 281.9 519.5 288.1 528.3 285.4 533.6 280.1 528.3 271.2 524.8 260.6 521.2 250 525.7 250.4 521.2 239.7 520.4 229.1 516.8 218.5Z"/>
<path d="M629.4 202.6 633.8 200.8 636.5 204.3 639.1 206.1 635.6 210.5 630.3 210.5 632 207Z"/>
<path d="M705.5 199.9 709.9 199 712.6 204.3 709.9 210.5 704.6 213.2 702.8 209.6 704.6 204.3Z"/>
<path d="M606.4 250.4 610.8 245.9 617.9 246.8 620.5 253.9 622.3 258.3 617.9 257.4 614.3 253 609 253.9Z"/>
<path d="M743.5 243.3 750.6 245.9 757.7 253.9 754.2 253.9 748.8 248.6 743.5 245.9Z"/>
<path d="M803 218.3 808.3 221 815.4 223.6 824.2 219.2 833.1 218 832.7 223.6 827.8 230.4 824.2 228.1 815.4 227.2 808.3 224.5Z"/>
<path d="M797.7 231.6 806.5 230.7 817.2 232.5 824.2 230.7 824.2 236 815.4 237.8 804.8 236.9 799.5 234.2Z"/>
<path d="M831.3 259 841.9 256.4 841.1 260.8 834.9 263.5Z"/>
<path d="M757.7 303.1 770.1 301.3 787.8 302.2 794.9 308.4 793.1 320.8 787.8 333.2 777.2 342 766.5 340.3 759.5 335 755 327.9 759.5 317.3 756.8 308.4Z"/>
<path d="M819.6 305.3 828.4 303.5 833.7 310.6 840.8 308.8 849.6 312.4 858.5 308.8 865.6 314.2 862 323 855 319.5 847.9 321.2 840.8 315.9 831.9 317.7 823.1 314.2Z"/>
<path d="M810.7 368.1 814.2 366.4 816.4 369.9 813.4 372.9 810.7 371.7Z"/>
<path d="M883.8 372.6 886.1 376.1 883.8 380 881.5 376.1Z"/>
<path d="M850.8 271.6 854.6 271 858.4 275.4 862.2 277.9 860.9 284.3 863.5 288.1 868.5 281.7 876.1 279.2 882.4 280.5 885 284.3 881.2 288.1 874.9 288.7 871.1 291.9 872.3 295.6 868.5 299.4 863.5 302 860.9 296.9 858.4 293.1 855.9 289.3 857.1 283 854.6 276.7Z"/>
<path d="M820.5 302 825.5 300.7 828.1 308.3 835.6 309.6 840.7 314.6 843.2 317.1 838.2 315.9 833.1 314.6 829.3 320.9 825.5 318.4 820.5 314.6Z"/>
<path d="M845.8 313.4 850.8 309.6 858.4 308.3 864.7 310.8 863.5 317.1 864.7 322.2 859.7 324.7 855.9 320.9 854.6 323.5 850.8 319.7 847 317.1Z"/>
<path d="M831.9 286.2 834.4 288.1 836.9 293.1 839.4 294.4 837.5 299.4 835.6 295.6 833.1 290.6Z"/>
<path d="M786.3 294.4 791.4 289.3 796.4 290.6 801.5 288.1 800.2 293.1 796.4 296.9 795.2 303.2 791.4 300.7 787.6 299.4Z"/>
<path d="M800.2 302 805.3 303.2 812.9 310.8 816.7 318.4 817.9 328.5 819.2 339.9 816.7 339.9 815.4 328.5 811.6 315.9 805.3 308.3Z"/>
<path d="M873.6 337.4 881.2 328.5 885 327.3 882.4 333.6 878.6 339.9Z"/>
</g>
<g fill="none" stroke="#a9cfff" stroke-linejoin="round" stroke-linecap="round">
<path d="M527.1 182 530.1 190.5 524 198 519 202.6 517 210.7 512.4 214.7 514.5 222.8 514.5 230" stroke-width="2.40"/>
<path d="M446 193.7 452.2 198.1" stroke-width="1.12"/>
<path d="M528.3 283.6 538.9 281.9 551.3 280.1 560 276.5" stroke-width="1.76"/>
<path d="M367.3 278.3 376.1 278.3 385 276.5 393.8 274.8 402.7 276.5 406.2 283.6 409.7 292.5 416.8 297.8 423.9 296 431 292.5 438.1 290.7" stroke-width="1.20"/>
<path d="M418.6 249.5 427.4 252.1 431.9 257.4 431 264.5 429.2 250 432.7 257.1 434.5 264.2 441.6 271.2 450.4 276.5 459.3 274.8 466.4 269.5 469.9 262.4 475.2 257.1" stroke-width="1.20"/>
<path d="M466.4 252.1 475.2 253.9 469.9 264.5 466.4 270" stroke-width="1.20"/>
<path d="M540 287.2 546 283 552.6 281.5 559 283.5 565.3 282.8 569 278 572.9 276.4 578 273 584.2 272.6 590 274.5 595.6 273.9 600.7 280.2 603.2 286.5 609 288 615.8 292.9 620.9 295.4 628.5 291.6 635 292 641.1 290.3 647 290 653.8 287.8 660 286 666.4 282.8 674 279.6 678 284 682.8 285.3 691.7 286.5" stroke-width="1.44"/>
<path d="M695.8 265.9 702.8 264.2 708.1 271.2 717 273" stroke-width="1.12"/>
<path d="M752.4 265.9 757.7 273 768.3 271.2 775.4 280.1 777.2 288.9 770.1 296 764.8 299.6" stroke-width="1.60"/>
<path d="M743.5 287.2 752.4 288.9 763 294.2" stroke-width="1.28"/>
<path d="M738.2 296 743.5 303.1 752.4 306.6" stroke-width="1.28"/>
<path d="M885 330.1 869.1 347.8 863.8 358.4 862 369 866.5 377.9 863.8 388.5 856.7 399.1 853.2 406.2 862 415 869.1 427.4 874.4 440" stroke-width="1.20"/>
<path d="M798.3 406.2 808.9 404.4 819.6 406.2 828.4 404.4 835.5 409.7 844.3 413.3" stroke-width="1.20"/>
<path d="M584.2 400.7 591.3 409.6 600.2 417 610.8 419.6 621.4 415.2 632 409.9 646.2 404.2 660.4 399.8 672.7 398.1 690.4 396.3 706.4 402.5 713.5 408.7 725.8 409.6 736.5 408.7 745.3 406.9" stroke-width="2.08"/>
<path d="M706.4 432.6 717 430.8 725.8 434.3 731.2 437.9" stroke-width="1.20"/>
<path d="M663.9 465.3 671 468 679.8 459.1 686.9 453.8" stroke-width="1.20"/>
<path d="M683.4 487.4 684.2 478.6 688.7 473.3" stroke-width="1.20"/>
<path d="M704.6 370.6 713.5 374.2 720.5 370.6" stroke-width="1.20"/>
<path d="M803.6 420 805.4 430.6 807.2 439.5 816 443" stroke-width="1.20"/>
<path d="M794.8 448.3 805.4 443.9 821.3 446.5 837.3 448.3 840.8 458.9 846.1 469.6 849.6 480.2 853.2 487.3 865.6 484.6 874.4 485.5" stroke-width="1.28"/>
<path d="M869.1 430.6 871.8 446.5 873.5 460.7 874.4 473.1 878 480.2 885 485.5 888.6 494.3 885 501.4 886.8 508.5 893.9 513.8 908.1 514.7" stroke-width="1.28"/>
<path d="M777.1 425.3 784.2 430.6 787.7 439.5" stroke-width="1.44"/>
<path d="M893.9 367.3 897.4 379.6 901.9 392" stroke-width="1.12"/>
<path d="M887.5 279.2 888.8 286.8 885 291.9 882.4 295.6 885 302 890 305.8" stroke-width="1.28"/>
<path d="M887.5 290.6 891.3 294.4 893.8 296.9" stroke-width="1.12"/>
</g>
<g fill="none" stroke="#1c1c1c" stroke-width=".9" stroke-linejoin="round">
<path d="M438.1 167.2 437.2 172.5 435.4 176.9 426.5 177.8 427.4 186.6 428.3 196.4 438.1 193.7 448.7 190.2 458.4 187.5 456.6 195.5 457.5 204.3 458.4 213.2 455.8 220.3 453.1 229.1 446.9 226.5 439.8 225.6 433.6 230.9 426.5 236.2 420.4 232.7 413.3 229.1 404.4 226.5 397.3 228.2 388.5 232.7 379.6 227.3 372.6 222.9 369 230.9 369.9 234.4"/>
<path d="M458.4 213.2 465.5 220.3 468.1 225.6 477 223.8 482.3 230.9 484.1 238 485.8 243.3 490.3 244.2 487.6 248.6 482.3 252.1 477 253.9 474.3 257.4 478.8 261 480.5 266.3 480.5 271.2 483.2 276.5 482.3 283.6 480.5 290.7"/>
<path d="M471.7 262.4 477 260.6 480.5 261.5"/>
<path d="M487.6 248.6 494.7 252.1 501.8 250.4 507.1 255.7 515.9 254.8 515 245 514.2 236.2 515.9 226.5 516.8 220.3 512.4 216.7"/>
<path d="M515 218.5 519.5 225.6 523 234.4 528.3 239.7 537.2 243.3 544.2 240.6 547.8 234.4 551.3 230.9 560 233.5"/>
<path d="M553.1 176 551.3 183.1 554.9 191.9 544.2 199 537.2 202.6 531.9 209.6 533.6 216.7 534.5 223.8 541.6 214.1 546.9 215 549.6 223.8 554.9 230 560 232.7"/>
<path d="M636.5 183.1 632 190.2 623.2 197.3 616.1 204.3 611.7 211.4 609 220.3 609.9 227.3 617.9 229.1 623.2 231.8 625.8 236.2 635.6 238 646.2 238 655 238 662.1 242.4 669.2 243.3 676.3 248.6 671 252.1 663.9 255.7 663.9 253.5 662.1 260.6 663.9 269.5 667.4 276.5 672.7 281.9 679.8 283.6 683.4 287.2 685.1 294.2 686.9 303.1 687.8 311.1 687.8 319 687.8 327.9 694 330.5 699.3 333.2 702.8 336.7 702.8 342 707.3 346.5 712.6 343.8 717 348.2 722.3 351.8 729.4 352.7 738.2 351.8 747.1 350.9 755.9 348.2 764.8 346.5 766.5 341.2 775.4 343.8 777.2 342.9"/>
<path d="M625.8 236.2 621.4 238 619.6 245 614.3 250.4 616.1 257.4 617.9 255.3 616.1 262.4 607.3 265.9 596.6 260.6"/>
<path d="M540 241.5 545.3 236.2 548 229.1 555.9 231.8 564.8 236.2 570.1 243.3 570.1 250.4 571.9 255.3 580.7 258 589.6 257.1 596.6 260.6 594.9 265.9 601.9 271.2 600.2 276.5 591.3 273 582.5 274.8 574.5 277.4 572.7 285.4"/>
<path d="M676.3 248.6 681.6 243.3 683.4 238 690.4 238 691.3 231.8 697.5 226.5 706.4 223.8 708.1 216.7 715.2 213.2 718.8 206.1 724.1 197.3 730.3 194.6 734.7 191.1 740 187.5"/>
<path d="M706.4 223.8 711.7 226.5 710.8 231.8 717 236.2 724.1 243.3 731.2 250.4 738.2 245 741.8 235.3 748 240.6 755.9 246.8 764.8 245 770.1 245 775.4 252.1 777.2 259.2 786 261.9 787.1 267.9 790.6 272.3 793.3 276.7 799.5 275.8 806.5 272.3 815.4 266.1 824.2 262.6 833.1 258.1 840.2 255.5"/>
<path d="M806.5 272.3 806.5 277.6 813.6 282 812.7 286.5 806.5 290 802.1 295.3 799.5 301.5 798.6 307.7"/>
<path d="M594 333.2 603.7 333.2 610.8 335 617.9 336.7 621.4 329.6 620.5 322.6 628.5 319.9 632 314.6 638.2 311.9 641.8 308.4 646.2 311.1 653.3 313.7 660.4 309.3 665.7 303.1 672.7 301.3 679.8 303.1 685.1 308.4 687.8 311.1"/>
<path d="M683.4 287.2 694 288.1 706.4 290.7 717 294.2 727.6 295.1 738.2 296 741.8 304.9 748.8 308.4 755 306.6 753.3 301.3 761.2 303.1 770.1 301.3 780.7 300.4 791.3 302.2 794.9 308.4"/>
<path d="M687.8 319 681.6 315.5 676.3 315.5 669.2 319 666.5 324.3 669.2 331.4 666.5 338.5 670.1 345.6 663.9 349.1 658.6 352.7 656.8 358 648 358 644.4 365 642.7 373.9 640.9 382.7 642.7 370.6 640.9 379.5 640 390.1 641.8 400.7 639.1 406.9 633.8 409.6 635.6 413.1 646.2 414.9"/>
<path d="M687.8 327.9 685.1 335 679.8 338.5 678.1 345.6 681.6 352.7 683.4 359.7 685.1 366.8 685.1 367.1 686.9 377.7 692.2 386.5"/>
<path d="M699.3 333.2 695.8 342 694.9 349.1 699.3 354.4 702.8 359.7 699.3 366.8 695.8 372.1"/>
<path d="M709.9 410.4 725.8 410.4 734.7 410.4"/>
<path d="M718.8 377.7 720.5 386.5 722.3 393.6 718.8 400.7 725.8 404.2 725.8 410.4"/>
<path d="M814.2 350.4 823.1 349.6 830.2 350.4 831.9 353.1 840.8 351.3 846.1 349.6 855 350.4 867.3 349.6 866.5 353.1"/>
<path d="M885 330.1 878 333.6 872.7 340.7 868.2 347.8 866.5 354.9 869.1 360.2 874.4 365.5 876.2 370.8 875.3 379.6 874.4 388.5 872.7 399.1 868.2 408 863.8 415 862 422.1 865.6 429.2 863.8 425.3 868.2 434.2 870 446.5 870.9 460.7 871.8 471.3 874.4 481.1 872.7 487.3 862 486.4 851.4 488.1 847 489"/>
<path d="M794.8 409.7 797.4 416.8 801 423.9 801 420 802.7 430.6 803.6 440.4 814.2 443.9 824.9 447.4 836.4 451.9 838.1 458.9 842.6 466 846.1 474.9 849.6 481.9 851.4 488.1"/>
<path d="M633 409.8 635.2 408.9 645.3 405.1 657.9 400.7 665.5 398.1 673 397.5 685 398 697 400.5 707.2 405.7 711 409.5"/>
<path d="M610.8 241.5 611.2 246.8 608.1 249.5 606.4 252.1 609.9 253.9 612.6 251.2 615.2 252.1"/>
<path d="M808.5 469.5 812 471 814 473.5 816.5 476 815 480 819 477 822.5 474.5 820 479 823 480.5 818.5 482.5 822 484.5 818.5 484 818.5 488"/>
<path d="M695.8 372.1 698.4 373.9 695.8 376.5 699.3 378.3"/>
<path d="M307 163.5 311.4 160.3 319 159.7 325.3 158.4 331.6 159.7 337.9 155.9 344.2 154.6 350.6 154 355.6 152.1 359.4 150.9 363.2 153.4 370.8 155.3 377.1 154.6 379 149 383.4 147.1 388.5 142.6 393.5 140.1 399.9 142.6 402.4 137.6 407.4 135.7 413.8 133.8 418.8 132.5 422.6 135.7 424.5 140.1 422 145.2 421.4 149 426.4 147.7 430.2 149.6 426.4 154 425.1 157.2 427.7 161.6 432.7 164.8 437.8 167.3 442.8 166.7 447.9 164.1 454.2 159.7 459.3 155.9 463.1 153.4 468.1 152.1 474.4 152.8 480 154 475.1 154 480.1 153.4 483.9 156.5 490.2 159.7 496.5 159.7 502.9 157.2 509.2 154.6 516.8 152.8 523.1 152.8 526.9 154.6 529.4 160.3 531.9 164.8 534.5 169.8 538.3 171.1 543.3 173 547.1 176.1 553.4 176.1 558.5 174.9 563.5 176.8 568.6 176.1 573.7 178.7 577.4 181.2 583.8 179.9 590.1 178.7 596.4 177.4 602.7 178.7 609 178 614.1 178.7 617.9 181.8 624.2 183.1 631.8 182.5 638.1 183.7 644.4 181.8 651.5 176 655.9 171.6 662.1 168.1 665.7 161 671.9 156.5 679.8 154.8 686.9 155.7 690.4 161 697.5 162.7 704.6 160.1 711.7 162.7 717 165.4 724.1 168.1 727.6 174.2 734.7 176.9 740 181.3 741.8 186.6 748.8 188.4 755.9 192.8 761.2 199 770.1 200.8 771.9 195.5 777.2 199 784.2 201.7 788.8 204.2 797.7 207.7 801.2 214.8 808.3 220.1 815.4 222.7 824.2 218.3 833.1 217.4 833.1 223.6 827.8 230.7 825.1 236.9 826.9 244.9 829.6 251.1 836.6 253.7 843.7 255.5 847.3 252.8 852.6 258.1 857.9 262.6 865 265.2 872 269.6 879.1 273.2 886.2 278.5 893.3 282 895.9 289.1 896.8 296.2 893.3 303.3 891.5 310.4 892.4 317.4 892.1 315.9 888.6 323 885.9 330.1 885 338.9 887.7 347.8 890.4 356.6 893.9 365.5 895.7 374.3 899.2 381.4 902.7 386.7 901.9 399.1 900.1 409.7 898.3 420.4 901 430.6 901.9 439.5 900.1 450.1 895.7 458.9 893.9 467.8 898.3 474.9 904.5 481.9 911.6 488.1 920.4 491.7 917.8 497.9 913.4 505 909.8 512 908.1 520 897.4 521.8 886.8 523.5 876.2 521.8 867.3 522.7 861.2 526.2 858.5 533.3 858.5 542.1 862 551 862 554.5 857.6 549.2 854.1 542.1 850.5 533.3 846.1 526.2 840.8 519.1 835.5 512 832.8 505 835.5 499.6 840.8 494.3 846.1 491.7 846.8 488.8 844.8 487.7 836.7 486.7 832.7 482.7 830.7 476.6 829.7 470.6 824.6 467.5 819.5 462.5 816.5 455.4 813.5 450.3 810.5 455 808.6 460.4 810.4 468.5 814.5 474.6 818.5 482 817 487 813.5 478 808.4 469.5 801.3 467.5 802.4 462.5 802.4 458.4 796.3 453.4 794.3 449.3 789.2 444.3 783.1 436.2 778.1 430.1 777.1 428.8 775.3 423.9 778.8 416.8 787.7 415 794.8 409.7 796.5 399.1 798.3 388.5 796.5 377.9 791.2 370.8 793 360.2 796.5 353.1 805.4 349.6 814.2 346 815.1 338.9 816.9 326.5 812.5 314.2 807.2 305.3 801.9 305.7 796.5 308 793 317.7 789.5 328.3 785.9 337.2 777.1 344.2 775.3 353.1 773.6 370.6 771.9 381.2 768.3 390.1 761.2 395.4 752.4 400.7 745.3 407.8 736.5 411.3 734.7 420.2 732 430.8 729.4 441.4 724.1 452 718.8 459.1 714.3 464.4 709.9 471.5 705.5 476.8 707.3 482.1 704.6 485.7 692.2 488.3 679.8 491 671 493.6 667.4 485.7 665.7 476.8 660.4 469.7 658.6 460.9 662.1 453.8 667.4 448.5 662.1 445 653.3 442.3 644.4 441.4 641.8 434.3 635.6 429.9 630.3 430.8 625 427.3 630.3 411.3 623.2 416.6 617.9 418.4 609 421.9 600.2 419.3 593.1 413.1 586.9 406 584.2 398.9 588.7 392.7 594.9 390.1 601.9 393.6 610.8 398.1 614.3 395.4 617.9 386.5 610.8 381.2 603.7 374.2 601.1 367.1 601.9 356.2 599.3 349.1 601.9 342 600.2 336.7 594 333.2 596.6 327.9 590.4 322.6 588.7 313.7 591.3 304.9 596.6 297.8 599.3 290.7 591.3 289.8 582.5 286.3 571.9 285.4 563 290.7 557.7 296 555.9 303.1 547.1 306.6 535.4 309.3 526.5 307.5 517.7 304 512.4 297.8 507.1 292.5 494.7 291.6 482.3 289.8 477.9 292.5 476.1 301.3 477 308.4 474.3 316.4 467.3 319.9 463.7 326.1 462.8 322.6 457.5 319 450.4 315.5 448.7 310.2 445.1 303.1 436.3 307.5 427.4 311.9 418.6 316.4 414.2 312.8 416.8 308.4 413.3 303.1 408 297.8 402.7 292.5 404.4 285.4 399.1 282.7 392 279.2 383.2 280.1 374.3 279.2 365.5 280.1 369 277.4 373.5 274.8 376.1 269.5 382.3 267.7 380.5 263.3 378.8 257.1 378.8 252.1 376.1 245 372.6 239.7 369.9 234.4 365.5 231.8 358.4 228.2 354.9 223.8 351.3 229.1 344.2 230.9 338.1 232.7 336.7 230 334.1 227.3 329.1 223.5 324 219.7 319.6 216 319 210.9 321.5 205.8 320.2 203.3 317.7 198.3 314.5 194.5 315.2 190.7 316.4 185.6 313.9 180.6 311.4 174.2 308.8 167.9Z" stroke-width="1"/>
</g>
<g font-family="'Liberation Sans','Noto Sans CJK SC',sans-serif" font-size="11.3" fill="#8e8e8e">
<text x="346.5" y="189" textLength="45.9" lengthAdjust="spacing">甘溪滩镇</text>
<text x="474.6" y="209.8" textLength="41.8" lengthAdjust="spacing">火连坡镇</text>
<text x="539.6" y="212" textLength="57.4" lengthAdjust="spacing">天供山林场</text>
<text x="558.2" y="227" textLength="34.4" lengthAdjust="spacing">金罗镇</text>
<text x="649.3" y="206.7" textLength="34.5" lengthAdjust="spacing">盐井镇</text>
<text x="748.4" y="236.8" textLength="34.5" lengthAdjust="spacing">复兴镇</text>
<text x="513.6" y="268.8" textLength="43.4" lengthAdjust="spacing">王家厂镇</text>
<text x="402.2" y="272.7" textLength="45.2" lengthAdjust="spacing">码头铺镇</text>
<text x="609.6" y="290.4" textLength="44.1" lengthAdjust="spacing">大堰垱镇</text>
<text x="706" y="270.8" textLength="33.4" lengthAdjust="spacing">梦溪镇</text>
<text x="719.2" y="324" textLength="33.6" lengthAdjust="spacing">涔南镇</text>
<text x="825.6" y="307.4" textLength="33.6" lengthAdjust="spacing">如东镇</text>
<text x="572.3" y="371.8" textLength="45.1" lengthAdjust="spacing">城头山镇</text>
<text x="638.6" y="368.8" textLength="45.2" lengthAdjust="spacing">澧西街道</text>
<text x="690.9" y="367.4" textLength="46" lengthAdjust="spacing">澧阳街道</text>
<text x="660.8" y="385.1" textLength="45.1" lengthAdjust="spacing">澧浦街道</text>
<text x="721.6" y="378.8" textLength="44.8" lengthAdjust="spacing">澧澹街道</text>
<text x="673.2" y="448.2" textLength="34.5" lengthAdjust="spacing">澧南镇</text>
<text x="805" y="423.6" textLength="45" lengthAdjust="spacing">小渡口镇</text>
<text x="875.8" y="446.2" textLength="34.4" lengthAdjust="spacing">官垸镇</text>
</g>
<path d="M693.6 381.6 695.1 386.1 699.9 386.2 696.1 389 697.5 393.5 693.6 390.8 689.7 393.5 691.1 389 687.3 386.2 692.1 386.1Z" fill="#ff0000"/>
<text x="699" y="388.6" font-family="'Liberation Sans','Noto Sans CJK SC',sans-serif" font-size="10.800" font-weight="bold" fill="#ff1a1a" textLength="21.600" lengthAdjust="spacing">澧县</text>
<g font-family="'Liberation Serif','Noto Serif CJK SC',serif" font-weight="bold">
<ellipse cx="480.3" cy="192.1" rx="4.6" ry="4.2" fill="#000" opacity=".18"/>
<circle cx="479.1" cy="190.5" r="4.5" fill="url(#dot)"/>
<text x="487" y="196" font-size="16.900" fill="#0a0a0a" textLength="70.98" lengthAdjust="spacing" style="filter:drop-shadow(.9px .9px .5px rgba(60,40,0,.55))">涔水北支</text>
<text x="459" y="212.3" font-size="17.400" fill="#0000ff" letter-spacing=".15">14.<tspan dx="4.200">04</tspan></text>
<ellipse cx="442.8" cy="287.5" rx="4.6" ry="4.2" fill="#000" opacity=".18"/>
<circle cx="441.6" cy="285.9" r="4.5" fill="url(#dot)"/>
<text x="449.8" y="291.4" font-size="16.900" fill="#0a0a0a" textLength="69.246" lengthAdjust="spacing" style="filter:drop-shadow(.9px .9px .5px rgba(60,40,0,.55))">涔水南支</text>
<text x="420.8" y="307.5" font-size="17.400" fill="#0000ff" letter-spacing=".15">13.<tspan dx="4.200">83</tspan></text>
<ellipse cx="699.2" cy="290.2" rx="4.6" ry="4.2" fill="#000" opacity=".18"/>
<circle cx="698" cy="288.6" r="4.5" fill="url(#dot)"/>
<text x="706.7" y="295" font-size="16.900" fill="#0a0a0a" textLength="32.934" lengthAdjust="spacing" style="filter:drop-shadow(.9px .9px .5px rgba(60,40,0,.55))">涔水</text>
<text x="678.6" y="310.2" font-size="17.400" fill="#0000ff" letter-spacing=".15">10.<tspan dx="4.200">40</tspan></text>
<ellipse cx="748.2" cy="360.1" rx="4.6" ry="4.2" fill="#000" opacity=".18"/>
<circle cx="747" cy="358.5" r="4.5" fill="url(#dot)"/>
<text x="756.2" y="364" font-size="16.900" fill="#0a0a0a" textLength="32.22" lengthAdjust="spacing" style="filter:drop-shadow(.9px .9px .5px rgba(60,40,0,.55))">澹水</text>
<text x="727.3" y="380" font-size="17.400" fill="#0000ff" letter-spacing=".15">10.<tspan dx="4.200">80</tspan></text>
<ellipse cx="665.6" cy="400.6" rx="4.6" ry="4.2" fill="#000" opacity=".18"/>
<circle cx="664.4" cy="399" r="4.5" fill="url(#dot)"/>
<text x="673" y="405" font-size="16.900" fill="#0a0a0a" textLength="32.22" lengthAdjust="spacing" style="filter:drop-shadow(.9px .9px .5px rgba(60,40,0,.55))">澧水</text>
<text x="644.8" y="421" font-size="17.400" fill="#0000ff" letter-spacing=".15">10.<tspan dx="4.200">41</tspan></text>
<ellipse cx="691.6" cy="453.6" rx="4.6" ry="4.2" fill="#000" opacity=".18"/>
<circle cx="690.4" cy="452" r="4.5" fill="url(#dot)"/>
<text x="699.4" y="458" font-size="16.900" fill="#0a0a0a" textLength="32.22" lengthAdjust="spacing" style="filter:drop-shadow(.9px .9px .5px rgba(60,40,0,.55))">道水</text>
<text x="670.7" y="473.3" font-size="17.400" fill="#0000ff" letter-spacing=".15">10.<tspan dx="4.200">00</tspan></text>
<ellipse cx="869.1" cy="395.9" rx="4.6" ry="4.2" fill="#000" opacity=".18"/>
<circle cx="867.9" cy="394.3" r="4.5" fill="url(#dot)"/>
<text x="876.4" y="400.7" font-size="16.900" fill="#0a0a0a" textLength="70.164" lengthAdjust="spacing" style="filter:drop-shadow(.9px .9px .5px rgba(60,40,0,.55))">松滋西支</text>
<text x="848.4" y="416" font-size="17.400" fill="#0000ff" letter-spacing=".15">15.<tspan dx="4.200">56</tspan></text>
</g>
<text x="459.800" y="150.700" font-family="'Liberation Serif','Noto Serif CJK SC',serif" font-size="19.2" font-weight="300" fill="#ff0000" textLength="308.500" lengthAdjust="spacing">2019-05-24日未来24小时预报面雨量</text>
<rect x="1177.500" y="132" width="34" height="24" fill="#d6e4f4"/><path d="M1181.500 137v1M1181.500 140v1M1181.500 143v1M1181.500 146v1M1181.500 149v1" stroke="#9fb3cc" stroke-width="1"/><circle cx="1197.600" cy="143.700" r="8" fill="url(#gp)" stroke="#a9dc90" stroke-width="1.200"/><path d="M1194.100 143.700h7M1197.600 140.200v7" stroke="#fff" stroke-width="2.200"/>
</svg>
<!--MAPSVG_E-->
</div>
<!--RP-->
<div id="rp" class="abs">
<div class="hd abs"><b>面雨量分析</b>
<svg class="abs" style="left:213px;top:4px" width="28" height="13" viewBox="0 0 28 13"><path d="M2.5 1.5h5M3.5 1.5v6M6.5 1.5v6M1.5 7.5h7M5 7.5v4.5" fill="none" stroke="#111" stroke-width="1.2"/><path d="M6 2v5" stroke="#111" stroke-width="1.6"/><path d="M16.5 2.5l8 8M24.5 2.5l-8 8" stroke="#111" stroke-width="1.5"/></svg></div>
<div class="abs" style="left:0;top:19px;width:243px;height:8px;border:1px solid #c5d0de;border-bottom:none;background:#f5fafe"></div>
<div class="lbl" style="left:5px;top:20px;background:#f5fafe;padding:0 0 0 1px;letter-spacing:7.500px">查询</div>
<div class="box" style="left:2px;top:41px;width:240px;height:115px"></div>
<div class="lbl" style="left:12.500px;top:58px;letter-spacing:4.500px">日期</div>
<div class="combo" style="left:44px;top:54px;width:109px">2019年  5月25日<i></i></div>
<div class="combo" style="left:155px;top:54px;width:42px;font-size:11px;line-height:16px">08<i></i></div>
<div class="lbl" style="left:202px;top:58px">时</div>
<div class="chk" style="left:11px;top:85px"></div>
<div class="lbl" style="left:29px;top:85px">至</div>
<div class="combo" style="left:44px;top:81px;width:109px">2019年  5月25日<i></i></div>
<div class="combo" style="left:155px;top:81px;width:42px;font-size:11px;line-height:16px">20<i></i></div>
<div class="lbl" style="left:202px;top:85px">时</div>
<div class="chk" style="left:14px;top:124px"></div>
<div class="lbl" style="left:31px;top:125px">列表</div>
<div class="btn" style="left:84px;top:123px">实时面雨量<svg class="abs" style="left:5px;top:2px" width="18" height="17" viewBox="0 0 18 17"><rect x="1.5" y="1.5" width="12" height="11" fill="#cfe3f6" stroke="#5f87b8"/><path d="M3 3h3v8H3z" fill="#7db85a"/><path d="M7 3h2v3H7z" fill="#e8c94a"/><path d="M4 4h2v2H4z" fill="#d6573c"/><circle cx="10" cy="9" r="3.3" fill="#e8f3fb" fill-opacity=".8" stroke="#5f87b8" stroke-width="1.2"/><path d="M12.5 11.5l2.5 2.5" stroke="#e0962e" stroke-width="2.2" stroke-linecap="round"/></svg></div>
<div class="box" style="left:2px;top:164px;width:240px;height:152px"></div>
<div class="lbl" style="left:21px;top:183px">日期</div>
<div class="combo" style="left:62px;top:176px;width:110px">2019年  5月24日<i></i></div>
<div class="rad" style="left:18px;top:213px"></div><div class="lbl s" style="left:35px;top:215px">12小时</div>
<div class="rad" style="left:81px;top:213px"></div><div class="lbl s" style="left:99px;top:215px">36小时</div>
<div class="rad" style="left:153px;top:212px"></div><div class="lbl s" style="left:170px;top:214.500px">60小时</div>
<div class="rad on" style="left:18px;top:243px"></div><div class="lbl s" style="left:35px;top:245px">24小时</div>
<div class="rad" style="left:83px;top:243px"></div><div class="lbl s" style="left:100px;top:245px">48小时</div>
<div class="rad" style="left:154px;top:243px"></div><div class="lbl s" style="left:172px;top:245px">72小时</div>
<div class="chk" style="left:19px;top:278px"></div>
<div class="lbl" style="left:37px;top:279px">列表</div>
<div class="btn" style="left:84px;top:273px">预报面雨量<svg class="abs" style="left:5px;top:2px" width="18" height="17" viewBox="0 0 18 17"><rect x="1.5" y="1.5" width="12" height="11" fill="#cfe3f6" stroke="#5f87b8"/><path d="M3 3h3v8H3z" fill="#7db85a"/><path d="M7 3h2v3H7z" fill="#e8c94a"/><path d="M4 4h2v2H4z" fill="#d6573c"/><circle cx="10" cy="9" r="3.3" fill="#e8f3fb" fill-opacity=".8" stroke="#5f87b8" stroke-width="1.2"/><path d="M12.5 11.5l2.5 2.5" stroke="#e0962e" stroke-width="2.2" stroke-linecap="round"/></svg></div>
</div>
<!--OUT-->
<div id="gap" class="abs"></div><div id="vgap" class="abs"></div>
<div id="ohd" class="abs"><b>输出窗口</b><svg class="abs" style="left:1444px;top:3px" width="28" height="13" viewBox="0 0 28 13"><path d="M2.5 1.5h5M3.5 1.5v6M6.5 1.5v6M1.5 7.5h7M5 7.5v4.5" fill="none" stroke="#111" stroke-width="1.2"/><path d="M6 2v5" stroke="#111" stroke-width="1.6"/><path d="M16.500 2.500l8 8M24.500 2.500l-8 8" stroke="#111" stroke-width="1.500"/></svg></div>
<div id="tbl" class="abs">
<div class="row" style="top:0;height:24px;border-bottom:none">
<span class="c" style="left:7px;top:9px">编号</span>
<span class="c" style="left:217px;top:9px">名称</span>
<span class="c" style="left:491px;top:9px">面雨量</span>
<span class="c" style="left:751px;top:9px">经度</span>
<span class="c" style="left:1049px;top:9px">纬度</span>
</div>
<div class="row" style="top:25.00px">
<span class="c n" style="left:6px">0</span>
<span class="c" style="left:216px">松滋西支</span>
<span class="c n" style="left:490px">15<u>.</u>56</span>
<span class="c n" style="left:750px">112<u>.</u>001625625028</span>
<span class="c n" style="left:1048px">29<u>.</u>6193549532281</span>
</div>
<div class="row" style="top:40.36px">
<span class="c n" style="left:6px">1</span>
<span class="c" style="left:216px">道水</span>
<span class="c n" style="left:490px">10<u>.</u>00</span>
<span class="c n" style="left:750px">111<u>.</u>747083055051</span>
<span class="c n" style="left:1048px">29<u>.</u>552156374923</span>
</div>
<div class="row" style="top:55.72px">
<span class="c n" style="left:6px">2</span>
<span class="c" style="left:216px">涔水北支</span>
<span class="c n" style="left:490px">14<u>.</u>04</span>
<span class="c n" style="left:750px">111<u>.</u>452105411342</span>
<span class="c n" style="left:1048px">29<u>.</u>8823476716939</span>
</div>
<div class="row" style="top:71.08px">
<span class="c n" style="left:6px">3</span>
<span class="c" style="left:216px">涔水</span>
<span class="c n" style="left:490px">10<u>.</u>40</span>
<span class="c n" style="left:750px">111<u>.</u>76200514631</span>
<span class="c n" style="left:1048px">29<u>.</u>7555811355086</span>
</div>
<div class="row" style="top:86.44px">
<span class="c n" style="left:6px">4</span>
<span class="c" style="left:216px">澧水</span>
<span class="c n" style="left:490px">10<u>.</u>41</span>
<span class="c n" style="left:750px">111<u>.</u>711219667627</span>
<span class="c n" style="left:1048px">29<u>.</u>6188012485048</span>
</div>
<div class="row" style="top:101.80px">
<span class="c n" style="left:6px">5</span>
<span class="c" style="left:216px">涔水南支</span>
<span class="c n" style="left:490px">13<u>.</u>83</span>
<span class="c n" style="left:750px">111<u>.</u>397267184503</span>
<span class="c n" style="left:1048px">29<u>.</u>7654476975921</span>
</div>
<div class="row" style="top:117.16px">
<span class="c n" style="left:6px">6</span>
<span class="c" style="left:216px">澹水</span>
<span class="c n" style="left:490px">10<u>.</u>80</span>
<span class="c n" style="left:750px">111<u>.</u>830565050435</span>
<span class="c n" style="left:1048px">29<u>.</u>6666157957282</span>
</div>
<div class="row" style="top:132.52px">
</div>
<div class="row" style="top:147.88px">
</div>
<div class="row" style="top:163.24px">
</div>
<div class="row" style="top:178.60px">
</div>
<div class="vl" style="left:209.5px"></div>
<div class="vl" style="left:485px"></div>
<div class="vl" style="left:744px"></div>
<div class="vl" style="left:1043px"></div>
</div>
<div id="hsb" class="abs"><div class="th"></div><svg class="abs" style="left:-1.500px;top:0" width="1475" height="16"><path d="M10.500 4.500 7 8 10.500 11.500M1466 4.500l3.500 3.500-3.500 3.500" fill="none" stroke="#333" stroke-width="1.600"/></svg></div>
<div id="status" class="abs"><span style="left:7px">经度:112°13'19"</span><span style="left:247px">纬度:29°36'51"</span></div>
</body>
</html>
